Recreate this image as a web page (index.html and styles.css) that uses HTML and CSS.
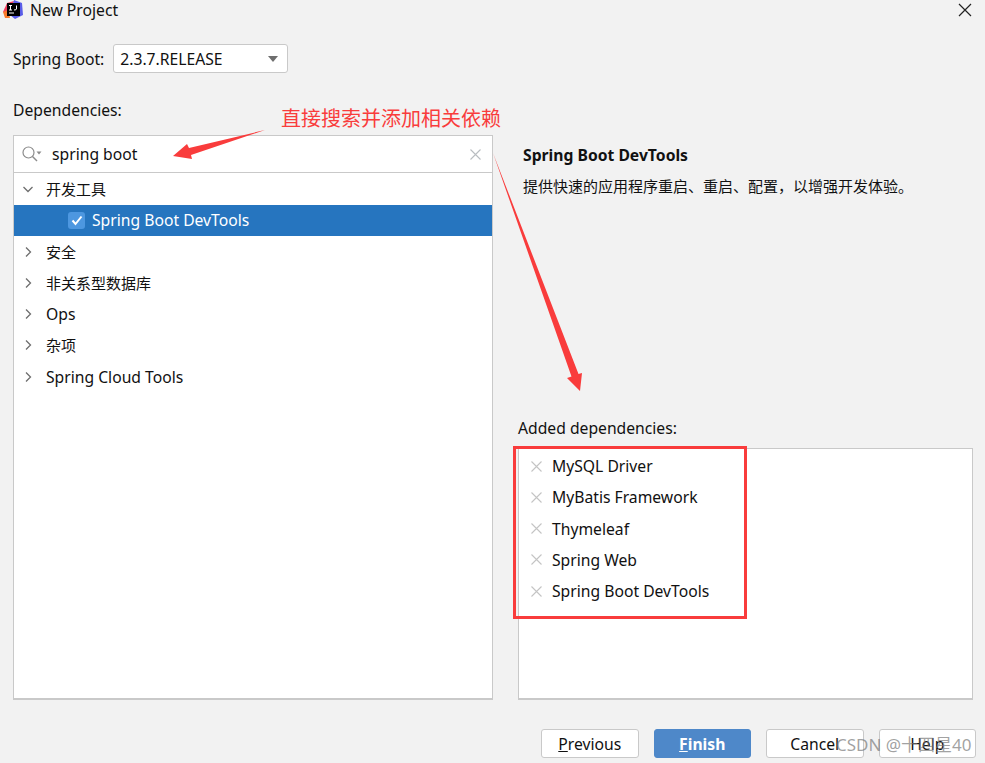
FILE: index.html
```html
<!DOCTYPE html>
<html lang="zh">
<head>
<meta charset="utf-8">
<title>New Project</title>
<link rel="stylesheet" href="styles.css">
</head>
<body>
<div class="dialog">
  <header class="titlebar">
    <svg class="logo" width="22" height="20" viewBox="0 0 22 20">
      <path d="M1 12 L5 3 L12 1 L8 14 Z" fill="#f0405f"/>
      <path d="M12 0 L20 3 L21 15 L13 19 L8 15 Z" fill="#5a5de8"/>
      <path d="M1 12 L6 10 L8 18 L3 18 Z" fill="#f97a2a"/>
      <rect x="5" y="3" width="13" height="13" fill="#000"/>
      <rect x="7" y="12.500" width="5" height="1" fill="#fff"/>
      <path d="M7 5.500 H10 M8.500 5.500 V10 M7 10 H10 M14.500 5.500 V9 Q14.500 10 12 10" stroke="#fff" stroke-width="1" fill="none"/>
    </svg>
    <span class="title">New Project</span>
    <svg class="close" width="14" height="14" viewBox="0 0 14 14"><path d="M1 1 L13 13 M13 1 L1 13" stroke="#222" stroke-width="1.200"/></svg>
  </header>

  <div class="version-row">
    <span>Spring Boot:</span>
    <div class="combo">
      <span>2.3.7.RELEASE</span>
      <i class="combo-arrow"></i>
    </div>
  </div>

  <div class="deps-label">Dependencies:</div>

  <main class="columns">
    <section class="panel left">
      <div class="search">
        <svg class="search-icon" width="22" height="18" viewBox="0 0 22 18">
          <circle cx="7.500" cy="7.500" r="5.500" fill="none" stroke="#8c8c8c" stroke-width="1.200"/>
          <path d="M11.500 11.500 L16 16" stroke="#8c8c8c" stroke-width="1.400"/>
          <path d="M15.500 6.500 H20.500 L18 9.500 Z" fill="#8c8c8c"/>
        </svg>
        <span class="search-text">spring boot</span>
        <svg class="search-clear" width="11" height="11" viewBox="0 0 11 11"><path d="M0.500 0.500 L10.500 10.500 M10.500 0.500 L0.500 10.500" stroke="#b9bdc1" stroke-width="1.100"/></svg>
      </div>
      <ul class="tree">
        <li class="node"><svg class="chev" width="12" height="12" viewBox="0 0 12 12"><path d="M1.500 4 L6 8.500 L10.500 4" fill="none" stroke="#6e6e6e" stroke-width="1.300"/></svg><span class="cjk">开发工具</span></li>
        <li class="node leaf selected">
          <span class="check"><svg width="12" height="11" viewBox="0 0 12 11"><path d="M1.500 5.500 L4.500 9 L10.500 1.500" fill="none" stroke="#fff" stroke-width="2"/></svg></span>
          <span>Spring Boot DevTools</span>
        </li>
        <li class="node"><svg class="chev" width="12" height="12" viewBox="0 0 12 12"><path d="M4 1.500 L8.500 6 L4 10.500" fill="none" stroke="#6e6e6e" stroke-width="1.300"/></svg><span class="cjk">安全</span></li>
        <li class="node"><svg class="chev" width="12" height="12" viewBox="0 0 12 12"><path d="M4 1.500 L8.500 6 L4 10.500" fill="none" stroke="#6e6e6e" stroke-width="1.300"/></svg><span class="cjk">非关系型数据库</span></li>
        <li class="node"><svg class="chev" width="12" height="12" viewBox="0 0 12 12"><path d="M4 1.500 L8.500 6 L4 10.500" fill="none" stroke="#6e6e6e" stroke-width="1.300"/></svg><span>Ops</span></li>
        <li class="node"><svg class="chev" width="12" height="12" viewBox="0 0 12 12"><path d="M4 1.500 L8.500 6 L4 10.500" fill="none" stroke="#6e6e6e" stroke-width="1.300"/></svg><span class="cjk">杂项</span></li>
        <li class="node"><svg class="chev" width="12" height="12" viewBox="0 0 12 12"><path d="M4 1.500 L8.500 6 L4 10.500" fill="none" stroke="#6e6e6e" stroke-width="1.300"/></svg><span>Spring Cloud Tools</span></li>
      </ul>
    </section>

    <section class="right">
      <div class="detail">
        <h2 class="detail-title">Spring Boot DevTools</h2>
        <p class="detail-text">提供快速的应用程序重启、重启、配置，以增强开发体验。</p>
      </div>
      <div class="added-label">Added dependencies:</div>
      <ul class="panel added">
        <li class="added-row"><svg width="11" height="11" viewBox="0 0 11 11"><path d="M0.500 0.500 L10.500 10.500 M10.500 0.500 L0.500 10.500" stroke="#c4c4c4" stroke-width="1.100"/></svg><span>MySQL Driver</span></li>
        <li class="added-row"><svg width="11" height="11" viewBox="0 0 11 11"><path d="M0.500 0.500 L10.500 10.500 M10.500 0.500 L0.500 10.500" stroke="#c4c4c4" stroke-width="1.100"/></svg><span>MyBatis Framework</span></li>
        <li class="added-row"><svg width="11" height="11" viewBox="0 0 11 11"><path d="M0.500 0.500 L10.500 10.500 M10.500 0.500 L0.500 10.500" stroke="#c4c4c4" stroke-width="1.100"/></svg><span>Thymeleaf</span></li>
        <li class="added-row"><svg width="11" height="11" viewBox="0 0 11 11"><path d="M0.500 0.500 L10.500 10.500 M10.500 0.500 L0.500 10.500" stroke="#c4c4c4" stroke-width="1.100"/></svg><span>Spring Web</span></li>
        <li class="added-row"><svg width="11" height="11" viewBox="0 0 11 11"><path d="M0.500 0.500 L10.500 10.500 M10.500 0.500 L0.500 10.500" stroke="#c4c4c4" stroke-width="1.100"/></svg><span>Spring Boot DevTools</span></li>
      </ul>
    </section>
  </main>

  <footer class="buttons">
    <div class="btn"><u>P</u>revious</div>
    <div class="btn primary"><u>F</u>inish</div>
    <div class="btn">Cancel</div>
    <div class="btn">Help</div>
  </footer>

  <svg class="arrows" width="985" height="763" viewBox="0 0 985 763">
    <path d="M265 130 L189 148 L187 144 L173 156 L192 159 L191 155 Z" fill="#f93c3c"/>
    <path d="M493 153 L578.500 374 L582 373 L580 391 L567 378 L571.500 376.500 Z" fill="#f93c3c"/>
  </svg>
  <div class="note">直接搜索并添加相关依赖</div>
  <div class="red-box"></div>
  <div class="watermark">CSDN @十四星40</div>
</div>
</body>
</html>
```
FILE: styles.css
```css
* { box-sizing: border-box; }
html, body { margin: 0; padding: 0; }
body {
  width: 985px;
  height: 763px;
  overflow: hidden;
  background: #f2f2f2;
  color: #111;
  font: 15.700px/20px "Noto Sans", "Noto Sans CJK SC", sans-serif;
}
.dialog { position: relative; width: 985px; height: 763px; }
ul { list-style: none; margin: 0; padding: 0; }
.cjk { font-size: 15px; }

.titlebar { display: flex; align-items: center; height: 20px; padding-left: 2px; }
.logo { flex: none; }
.title { margin-left: 6px; }
.close { margin-left: auto; margin-right: 13px; }

.version-row { display: flex; align-items: center; gap: 9px; margin: 24px 0 0 13px; height: 29px; }
.combo {
  display: flex;
  align-items: center;
  justify-content: space-between;
  width: 175px;
  height: 29px;
  padding: 0 9px 0 6px;
  background: #fff;
  border: 1px solid #c9c9c9;
  border-radius: 3px;
}
.combo-arrow { width: 0; height: 0; border-left: 5px solid transparent; border-right: 5px solid transparent; border-top: 6px solid #6e6e6e; }

.deps-label { margin: 27px 0 0 13px; }

.columns { display: grid; grid-template-columns: 480px 455px; column-gap: 25px; margin: 15px 0 0 13px; height: 565px; }
.panel { background: #fff; border: 1px solid #c9c9c9; border-bottom-width: 2px; }
.left { display: flex; flex-direction: column; }

.search { display: flex; align-items: center; height: 37px; padding: 0 11px 0 7px; border-bottom: 1px solid #c9c9c9; flex: none; }
.search-icon { flex: none; }
.search-text { margin-left: 9px; }
.search-clear { margin-left: auto; }

.tree { padding-top: 0.500px; }
.node { display: flex; align-items: center; gap: 12px; height: 31.250px; padding-left: 8px; }
.leaf { padding-left: 54px; gap: 7px; }
.selected { background: #2675bf; color: #fff; }
.check { display: flex; align-items: center; justify-content: center; width: 17px; height: 17px; background: #4d97e0; border-radius: 3px; }

.right { display: flex; flex-direction: column; min-height: 0; }
.detail { height: 283px; padding: 10px 0 0 5px; }
.detail-title { margin: 0; font-size: 15.700px; line-height: 20px; font-weight: 700; }
.detail-text { margin: 11px 0 0; font-size: 15px; line-height: 20px; }
.added-label { height: 30px; }
.added { flex: 1; padding-top: 1.500px; }
.added-row { display: flex; align-items: center; gap: 10px; height: 31.250px; padding-left: 12px; }

.buttons { display: flex; gap: 15px; margin: 29px 0 0 541px; }
.btn {
  display: flex;
  align-items: center;
  justify-content: center;
  width: 97.500px;
  height: 29px;
  background: #fff;
  border: 1px solid #c9c9c9;
  border-radius: 3px;
}
.primary { background: #4e88c9; border-color: #4e88c9; color: #fff; font-weight: 700; }

.arrows { position: absolute; left: 0; top: 0; pointer-events: none; }
.note { position: absolute; left: 281px; top: 106px; font-size: 20px; line-height: 26px; color: #f93c3c; }
.red-box { position: absolute; left: 513px; top: 446px; width: 234px; height: 173px; border: 3px solid #f93c3c; }
.watermark { position: absolute; left: 836px; top: 734px; font-size: 17px; line-height: 22px; color: rgba(120, 120, 120, .7); white-space: nowrap; }
```
